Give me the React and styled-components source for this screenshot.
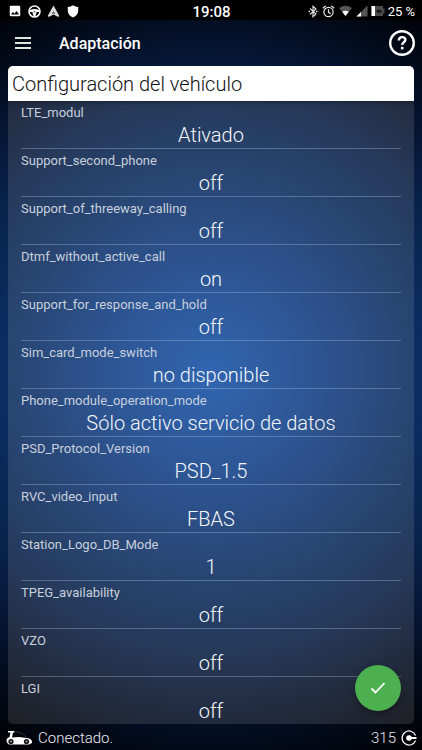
import React from 'react';
import styled, { createGlobalStyle } from 'styled-components';

const GlobalStyle = createGlobalStyle`
  * { box-sizing: border-box; }
  body {
    margin: 0;
    background: #000;
    color: #e9edf3;
    font-family: Roboto, 'Liberation Sans', sans-serif;
  }
  button { font: inherit; color: inherit; background: none; border: 0; padding: 0; cursor: pointer; }
`;

const Screen = styled.div`
  min-height: 100vh;
  display: flex;
  flex-direction: column;
  background: radial-gradient(ellipse 90% 51% at 50% 50%, #1553ab 0%, #11428c 25%, #0c3068 50%, #082148 72%, #04122c 88%, #020815 100%, #000 113%);
`;

const StatusBar = styled.div`
  height: 20px;
  padding: 0 7px 0 8px;
  display: grid;
  grid-template-columns: 1fr auto 1fr;
  align-items: center;
  background: #000;
  color: #fff;
`;

const StatusGroup = styled.div`
  display: flex;
  align-items: center;
  justify-content: ${(p) => (p.$end ? 'flex-end' : 'flex-start')};
  gap: ${(p) => (p.$end ? '3px' : '6px')};
  svg { display: block; flex: none; }
`;

const Clock = styled.time`
  padding-top: 2px;
  font-size: 15px;
  line-height: 20px;
  font-weight: 500;
`;

const Battery = styled.span`
  padding-top: 1px;
  font-size: 13px;
  line-height: 20px;
  white-space: nowrap;
`;

const AppBar = styled.header`
  height: 46px;
  padding: 0 7px 0 15px;
  display: flex;
  align-items: center;
  gap: 28px;
  color: #fff;
`;

const IconButton = styled.button`
  display: flex;
  svg { display: block; }
`;

const AppTitle = styled.h1`
  flex: 1;
  margin: 0;
  padding-top: 2px;
  font-size: 16px;
  line-height: 24px;
  font-weight: 500;
`;

const Card = styled.main`
  flex: 1;
  margin: 0 8px;
  border-radius: 5px;
  overflow: hidden;
  background: rgba(255, 240, 225, 0.12);
`;

const CardTitle = styled.h2`
  margin: 0;
  padding: 6px 4px 4px;
  background: #fff;
  color: #111;
  font-size: 20px;
  line-height: 25px;
  font-weight: 300;
  box-shadow: 0 1px 5px rgba(0, 0, 0, 0.4);
`;

const Settings = styled.ul`
  margin: 0;
  padding: 0 13px;
  list-style: none;
`;

const SettingItem = styled.li`
  border-bottom: 1px solid rgba(200, 215, 235, 0.3);
  &:last-child { border-bottom: 0; }
`;

const SettingButton = styled.button`
  width: 100%;
  display: flex;
  flex-direction: column;
  height: 47px;
`;

const SettingName = styled.span`
  text-align: left;
  font-size: 13px;
  line-height: 23px;
  font-weight: 400;
  color: #c8d0dd;
`;

const SettingValue = styled.span`
  align-self: stretch;
  text-align: center;
  font-size: 20px;
  line-height: 22px;
  font-weight: 300;
  color: #f4f6fa;
`;

const Footer = styled.footer`
  height: 26px;
  padding: 2px 5px 0 6px;
  display: flex;
  align-items: center;
  gap: 5px;
  font-size: 15px;
  line-height: 24px;
  font-weight: 300;
  svg { display: block; flex: none; }
`;

const FooterText = styled.span`
  flex: ${(p) => (p.$grow ? 1 : 'none')};
`;

const ConfirmButton = styled.button`
  position: fixed;
  right: 21px;
  bottom: 39px;
  width: 46px;
  height: 46px;
  border-radius: 50%;
  && { background: #4caf50; color: #fff; }
  display: flex;
  align-items: center;
  justify-content: center;
  box-shadow: 0 3px 6px rgba(0, 0, 0, 0.35);
`;

const PictureIcon = () => (
  <svg width="14" height="14" viewBox="0 0 24 24" fill="#fff" aria-hidden="true">
    <path d="M21 19V5c0-1.100-.9-2-2-2H5c-1.100 0-2 .9-2 2v14c0 1.100.9 2 2 2h14c1.100 0 2-.9 2-2zM8.500 13.500l2.500 3 3.500-4.500 4.500 6H5l3.500-4.500z" />
  </svg>
);

const WheelIcon = () => (
  <svg width="13" height="13" viewBox="0 0 24 24" aria-hidden="true">
    <circle cx="12" cy="12" r="10.200" fill="none" stroke="#fff" strokeWidth="2.800" />
    <path d="M3 9.500Q12 5.500 21 9.500V13h-5l-2.500 8h-3L8 13H3z" fill="#fff" />
    <circle cx="12" cy="12.500" r="1.800" fill="#777" />
  </svg>
);

const AutoIcon = () => (
  <svg width="13" height="13" viewBox="0 0 24 24" aria-hidden="true">
    <path d="M12 1l10.500 19-1.800 2L12 17.500 3.300 22l-1.800-2z" fill="#ddd" />
    <path d="M12 11l3.500 6L12 15 8.500 17z" fill="#555" />
  </svg>
);

const ShieldIcon = () => (
  <svg width="14" height="14" viewBox="0 0 24 24" fill="#fff" aria-hidden="true">
    <path d="M12 2c3 2 6 2.800 9 3v6c0 6-3.500 9.500-9 12-5.500-2.500-9-6-9-12V5c3-.2 6-1 9-3z" />
  </svg>
);

const BluetoothIcon = () => (
  <svg width="12" height="13" viewBox="0 0 24 24" fill="none" stroke="#e6e6e6" strokeWidth="2.200" aria-hidden="true">
    <path d="M6 6l12 11-6 5.500v-21L18 7 6 18" />
    <path d="M3 12h3M18 12h3" strokeWidth="3" />
  </svg>
);

const AlarmIcon = () => (
  <svg width="13" height="13" viewBox="0 0 24 24" fill="none" stroke="#e6e6e6" strokeWidth="2.200" aria-hidden="true">
    <circle cx="12" cy="13" r="8.500" />
    <path d="M12 8v5.500l4 2.500M1.500 6L7 1.500M22.500 6L17 1.500" />
  </svg>
);

const WifiIcon = () => (
  <svg width="15" height="12" viewBox="0 0 28 24" aria-hidden="true">
    <path d="M1 6Q14-3 27 6L14 22z" fill="#555" />
    <path d="M7.500 13.500Q14 9.500 20.500 13.500L14 22z" fill="#fff" />
  </svg>
);

const SignalIcon = () => (
  <svg width="12" height="12" viewBox="0 0 24 24" aria-hidden="true">
    <path d="M1 23L23 1v22z" fill="#555" />
    <path d="M1 23L10 14v9z" fill="#fff" />
  </svg>
);

const BatteryIcon = () => (
  <svg width="14" height="12" viewBox="0 0 28 24" aria-hidden="true">
    <path d="M1 2h23v5h3v10h-3v5H1z" fill="#4a4a4a" />
    <path d="M1 2h7v20H1z" fill="#fff" />
    <path d="M10 12l5-4v2h6v5h-6v2z" fill="#151515" />
  </svg>
);

const MenuIcon = () => (
  <svg width="16" height="12" viewBox="0 0 16 12" fill="#dfe6e2" aria-hidden="true">
    <path d="M0 0h16v2H0zM0 5h16v2H0zM0 10h16v2H0z" />
  </svg>
);

const HelpIcon = () => (
  <svg width="26" height="26" viewBox="0 0 26 26" fill="none" stroke="#fff" aria-hidden="true">
    <circle cx="13" cy="13" r="11.800" strokeWidth="2.400" />
    <path d="M9.800 10.600c0-4.600 6.600-4.400 6.600-.8 0 2.300-3.200 2.500-3.200 5.200" strokeWidth="2.400" />
    <path d="M13.200 16.800v2.600" strokeWidth="2.600" />
  </svg>
);

const CheckIcon = () => (
  <svg width="16" height="16" viewBox="0 0 16 16" fill="none" stroke="#fff" strokeWidth="1.800" aria-hidden="true">
    <path d="M1.500 8.500L5.500 12.500 14.500 3" />
  </svg>
);

const CarIcon = () => (
  <svg width="27" height="15" viewBox="0 0 27 15" aria-hidden="true">
    <path d="M2 0h6.500v1.500H7L6 6.500l7-.5 8 1c4 .5 5.500 2.500 5 5L23 13.500H3C.5 12 0 9.500 1 7.500L3.500 6 4.500 1.500H2z" fill="#fff" />
    <path d="M8 1c5-.6 9 1.500 12 5" fill="none" stroke="#333" strokeWidth="1" />
    <circle cx="5" cy="10.500" r="2.600" fill="#111" />
    <circle cx="5" cy="10.500" r="1" fill="#aaa" />
    <circle cx="20.500" cy="10.500" r="2.600" fill="#111" />
    <circle cx="20.500" cy="10.500" r="1" fill="#aaa" />
  </svg>
);

const CreditIcon = () => (
  <svg width="16" height="16" viewBox="0 0 16 16" aria-hidden="true">
    <path d="M14.600 5.500A7 7 0 1 0 14.600 10.500" fill="none" stroke="#fff" strokeWidth="1.200" />
    <circle cx="8" cy="8" r="2.800" fill="#fff" />
    <path d="M8 8h7.500" stroke="#fff" strokeWidth="2" />
  </svg>
);

const settings = [
  ['LTE_modul', 'Ativado'],
  ['Support_second_phone', 'off'],
  ['Support_of_threeway_calling', 'off'],
  ['Dtmf_without_active_call', 'on'],
  ['Support_for_response_and_hold', 'off'],
  ['Sim_card_mode_switch', 'no disponible'],
  ['Phone_module_operation_mode', 'Sólo activo servicio de datos'],
  ['PSD_Protocol_Version', 'PSD_1.5'],
  ['RVC_video_input', 'FBAS'],
  ['Station_Logo_DB_Mode', '1'],
  ['TPEG_availability', 'off'],
  ['VZO', 'off'],
  ['LGI', 'off'],
];

export default function App() {
  return (
    <Screen>
      <GlobalStyle />
      <StatusBar>
        <StatusGroup>
          <PictureIcon />
          <WheelIcon />
          <AutoIcon />
          <ShieldIcon />
        </StatusGroup>
        <Clock>19:08</Clock>
        <StatusGroup $end>
          <BluetoothIcon />
          <AlarmIcon />
          <WifiIcon />
          <SignalIcon />
          <BatteryIcon />
          <Battery>25 %</Battery>
        </StatusGroup>
      </StatusBar>
      <AppBar>
        <IconButton aria-label="Menú"><MenuIcon /></IconButton>
        <AppTitle>Adaptación</AppTitle>
        <IconButton aria-label="Ayuda"><HelpIcon /></IconButton>
      </AppBar>
      <Card>
        <CardTitle>Configuración del vehículo</CardTitle>
        <Settings>
          {settings.map(([name, value]) => (
            <SettingItem key={name}>
              <SettingButton>
                <SettingName>{name}</SettingName>
                <SettingValue>{value}</SettingValue>
              </SettingButton>
            </SettingItem>
          ))}
        </Settings>
      </Card>
      <Footer>
        <CarIcon />
        <FooterText $grow>Conectado.</FooterText>
        <FooterText>315</FooterText>
        <CreditIcon />
      </Footer>
      <ConfirmButton aria-label="Confirmar"><CheckIcon /></ConfirmButton>
    </Screen>
  );
}
